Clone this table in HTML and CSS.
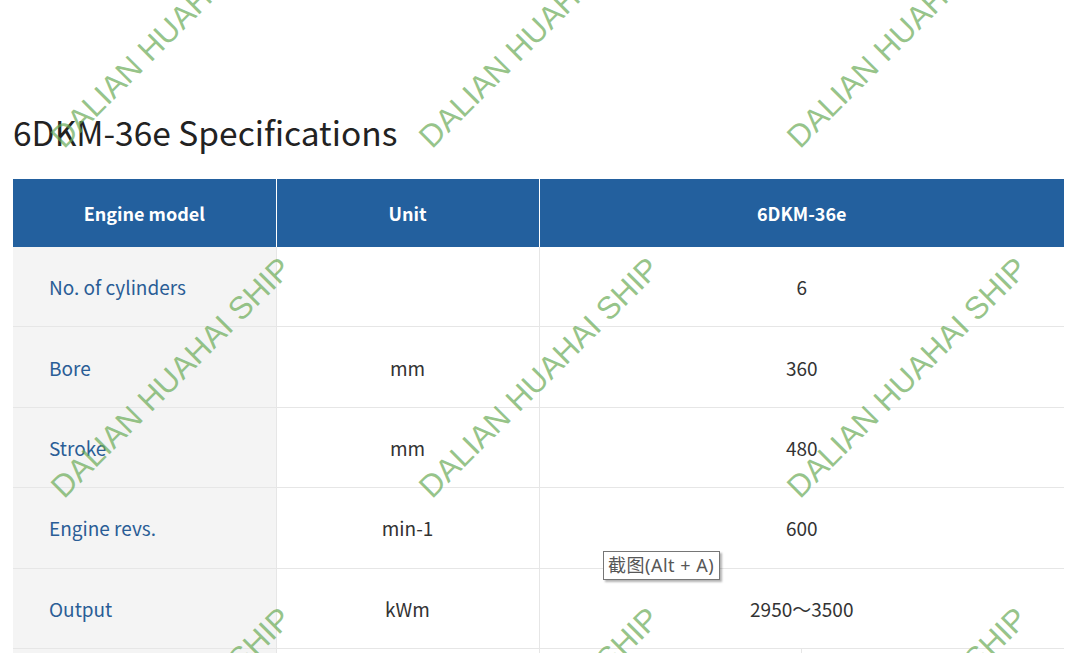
FILE: index.html
```html
<!DOCTYPE html>
<html lang="en">
<head>
<meta charset="utf-8">
<title>6DKM-36e Specifications</title>
<link rel="stylesheet" href="styles.css">
</head>
<body>
<main class="page">
  <h1 class="title">6DKM-36e Specifications</h1>
  <table class="spec">
    <colgroup><col class="c1"><col class="c2"><col class="c3"><col class="c4"></colgroup>
    <thead>
      <tr><th>Engine model</th><th>Unit</th><th colspan="2">6DKM-36e</th></tr>
    </thead>
    <tbody>
      <tr><td class="label">No. of cylinders</td><td></td><td colspan="2">6</td></tr>
      <tr><td class="label">Bore</td><td>mm</td><td colspan="2">360</td></tr>
      <tr><td class="label">Stroke</td><td>mm</td><td colspan="2">480</td></tr>
      <tr><td class="label">Engine revs.</td><td>min-1</td><td colspan="2">600</td></tr>
      <tr><td class="label">Output</td><td>kWm</td><td colspan="2">2950～3500</td></tr>
      <tr><td class="label"></td><td></td><td></td><td></td></tr>
    </tbody>
  </table>
</main>
<div class="watermarks" aria-hidden="true">
  <div class="wm-cell"><span class="wm">DALIAN HUAHAI SHIP</span></div>
  <div class="wm-cell"><span class="wm">DALIAN HUAHAI SHIP</span></div>
  <div class="wm-cell"><span class="wm">DALIAN HUAHAI SHIP</span></div>
  <div class="wm-cell"><span class="wm">DALIAN HUAHAI SHIP</span></div>
  <div class="wm-cell"><span class="wm">DALIAN HUAHAI SHIP</span></div>
  <div class="wm-cell"><span class="wm">DALIAN HUAHAI SHIP</span></div>
  <div class="wm-cell"><span class="wm">DALIAN HUAHAI SHIP</span></div>
  <div class="wm-cell"><span class="wm">DALIAN HUAHAI SHIP</span></div>
  <div class="wm-cell"><span class="wm">DALIAN HUAHAI SHIP</span></div>
</div>
<div class="tooltip">截图(Alt + A)</div>
</body>
</html>
```
FILE: styles.css
```css
html, body {
  margin: 0;
  padding: 0;
  background: #fff;
  overflow: hidden;
}
body {
  font-family: "Noto Sans CJK SC", "Noto Sans", sans-serif;
  color: #333;
  position: relative;
  width: 1085px;
  height: 653px;
}
.page {
  padding: 0 0 0 13px;
}
.title {
  margin: 0;
  padding-top: 108px;
  font-size: 33.5px;
  line-height: 48px;
  font-weight: 400;
  color: #222;
  height: 71px;
}
.spec {
  width: 1051px;
  border-collapse: collapse;
  table-layout: fixed;
  font-size: 19px;
}
.c1 { width: 263px; }
.c2 { width: 263px; }
.c3 { width: 262px; }
.c4 { width: 263px; }
.spec th {
  background: #23609e;
  color: #fff;
  font-size: 18px;
  font-weight: 700;
  height: 68px;
  padding: 0;
  text-align: center;
  border-left: 1px solid #fff;
}
.spec th:first-child { border-left: 0; }
.spec td {
  height: 79.4px;
  padding: 0;
  text-align: center;
  color: #333;
  border-bottom: 1px solid #e6e6e6;
  border-left: 1px solid #e6e6e6;
  background: #fff;
}
.spec td.label {
  text-align: left;
  padding-left: 36px;
  color: #2a5d96;
  background: #f4f4f4;
  border-left: 0;
}
.watermarks {
  position: absolute;
  left: 68px;
  top: -197px;
  display: grid;
  grid-template-columns: repeat(3, 368px);
  grid-auto-rows: 350px;
  pointer-events: none;
}
.wm-cell {
  display: flex;
  align-items: flex-end;
}
.wm {
  font-family: "Liberation Sans", Arial, sans-serif;
  font-size: 31.5px;
  line-height: 1;
  white-space: nowrap;
  color: rgba(105, 170, 85, 0.7);
  transform: rotate(-45deg);
  transform-origin: 0 100%;
}
.tooltip {
  position: absolute;
  left: 603px;
  top: 551px;
  border: 1px solid #767676;
  background: #fff;
  color: #575757;
  font-family: "Noto Sans", "Noto Sans CJK SC", sans-serif;
  font-size: 18px;
  letter-spacing: 0.5px;
  line-height: 25px;
  padding: 1px 5px 1px 4px;
  box-shadow: 2px 2px 2px rgba(0, 0, 0, 0.3);
}
```
